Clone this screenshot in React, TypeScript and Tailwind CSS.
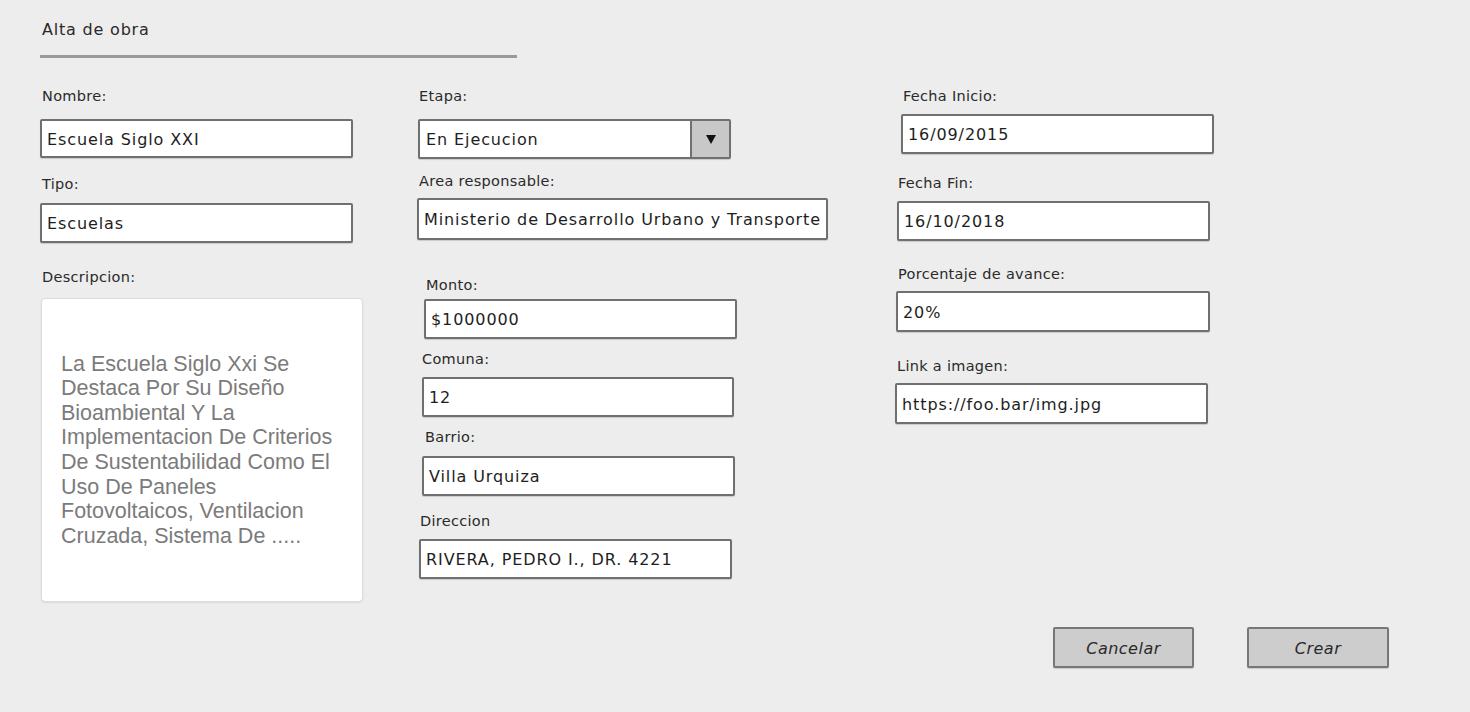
import React from "react";

const Label = ({ children, className = "" }: { children: React.ReactNode; className?: string }) => (
  <div className={`h-[18px] leading-[18px] text-[14.5px] tracking-[0.3px] text-[#2a2a2a] whitespace-nowrap ${className}`}>{children}</div>
);

const Field = ({ value, className = "" }: { value: string; className?: string }) => (
  <div
    className={`flex items-center bg-white border-2 border-[#707070] rounded-[2px] shadow-[0_1px_1px_rgba(0,0,0,0.15)] px-[5px] pt-[2px] text-[16px] tracking-[0.9px] text-[#1e1e1e] whitespace-nowrap overflow-hidden ${className}`}
  >
    {value}
  </div>
);

export default function App() {
  return (
    <div className="w-[1470px] h-[712px] bg-[#ededed] font-['DejaVu_Sans',sans-serif] overflow-hidden">
      <div className="pt-[21px] pl-[42px] h-[39px] text-[16px] tracking-[0.8px] leading-[18px] text-[#2a2a2a]">Alta de obra</div>
      <div className="ml-[40px] mt-[16px] w-[477px] h-[3px] bg-[#9a9a9a]" />

      <div className="flex mt-[29px]">
        {/* Column 1 */}
        <div className="ml-[40px] w-[323px] flex flex-col items-start">
          <Label className="ml-[2px]">Nombre:</Label>
          <Field value="Escuela Siglo XXI" className="mt-[14px] w-[313px] h-[39px]" />
          <Label className="mt-[17px] ml-[2px]">Tipo:</Label>
          <Field value="Escuelas" className="mt-[10px] w-[313px] h-[40px]" />
          <Label className="mt-[25px] ml-[2px]">Descripcion:</Label>
          <div className="mt-[12px] ml-[1px] w-[322px] h-[304px] bg-white border border-[#dcdcdc] rounded-[4px] shadow-[0_1px_2px_rgba(0,0,0,0.08)] flex items-center pl-[19px]">
            <p className="font-['Liberation_Sans',sans-serif] text-[21.5px] leading-[24.6px] text-[#7b7b7b] whitespace-nowrap">
              La Escuela Siglo Xxi Se<br />
              Destaca Por Su Diseño<br />
              Bioambiental Y La<br />
              Implementacion De Criterios<br />
              De Sustentabilidad Como El<br />
              Uso De Paneles<br />
              Fotovoltaicos, Ventilacion<br />
              Cruzada, Sistema De .....
            </p>
          </div>
        </div>

        {/* Column 2 */}
        <div className="ml-[54px] w-[411px] flex flex-col items-start">
          <Label className="ml-[2px]">Etapa:</Label>
          <div className="mt-[14px] ml-[1px] w-[313px] h-[40px] flex bg-white border-2 border-[#707070] rounded-[2px] shadow-[0_1px_1px_rgba(0,0,0,0.15)] overflow-hidden">
            <div className="flex-1 flex items-center px-[6px] pt-[2px] text-[16px] tracking-[0.9px] text-[#1e1e1e]">En Ejecucion</div>
            <div className="w-[39px] bg-[#c8c8c8] border-l-2 border-[#707070] flex items-center justify-center">
              <svg width="10" height="9" viewBox="0 0 10 9">
                <polygon points="0,0 10,0 5,9" fill="#111" />
              </svg>
            </div>
          </div>
          <Label className="mt-[13px] ml-[2px]">Area responsable:</Label>
          <Field value="Ministerio de Desarrollo Urbano y Transporte" className="mt-[8px] w-[411px] h-[42px]" />
          <Label className="mt-[36px] ml-[9px]">Monto:</Label>
          <Field value="$1000000" className="mt-[5px] ml-[7px] w-[313px] h-[40px]" />
          <Label className="mt-[11px] ml-[5px]">Comuna:</Label>
          <Field value="12" className="mt-[9px] ml-[5px] w-[312px] h-[40px]" />
          <Label className="mt-[11px] ml-[8px]">Barrio:</Label>
          <Field value="Villa Urquiza" className="mt-[10px] ml-[5px] w-[313px] h-[40px]" />
          <Label className="mt-[16px] ml-[3px]">Direccion</Label>
          <Field value="RIVERA, PEDRO I., DR. 4221" className="mt-[9px] ml-[2px] w-[313px] h-[40px]" />
        </div>

        {/* Column 3 */}
        <div className="ml-[67px] w-[320px] flex flex-col items-start">
          <Label className="ml-[8px]">Fecha Inicio:</Label>
          <Field value="16/09/2015" className="mt-[9px] ml-[6px] w-[313px] h-[40px]" />
          <Label className="mt-[20px] ml-[3px]">Fecha Fin:</Label>
          <Field value="16/10/2018" className="mt-[9px] ml-[2px] w-[313px] h-[40px]" />
          <Label className="mt-[24px] ml-[3px]">Porcentaje de avance:</Label>
          <Field value="20%" className="mt-[8px] ml-[1px] w-[314px] h-[41px]" />
          <Label className="mt-[25px] ml-[2px]">Link a imagen:</Label>
          <Field value="https://foo.bar/img.jpg" className="mt-[8px] w-[313px] h-[41px]" />
        </div>
      </div>

      <div className="flex mt-[25px] ml-[1053px] gap-[53px]">
        <button className="w-[141px] h-[41px] pt-[2px] bg-[#cdcdcd] border-2 border-[#777] rounded-[2px] text-[16px] tracking-[0.5px] italic text-[#2a2a2a] shadow-[0_1px_1px_rgba(0,0,0,0.15)]">
          Cancelar
        </button>
        <button className="w-[142px] h-[41px] pt-[2px] bg-[#cdcdcd] border-2 border-[#777] rounded-[2px] text-[16px] tracking-[0.5px] italic text-[#2a2a2a] shadow-[0_1px_1px_rgba(0,0,0,0.15)]">
          Crear
        </button>
      </div>
    </div>
  );
}
